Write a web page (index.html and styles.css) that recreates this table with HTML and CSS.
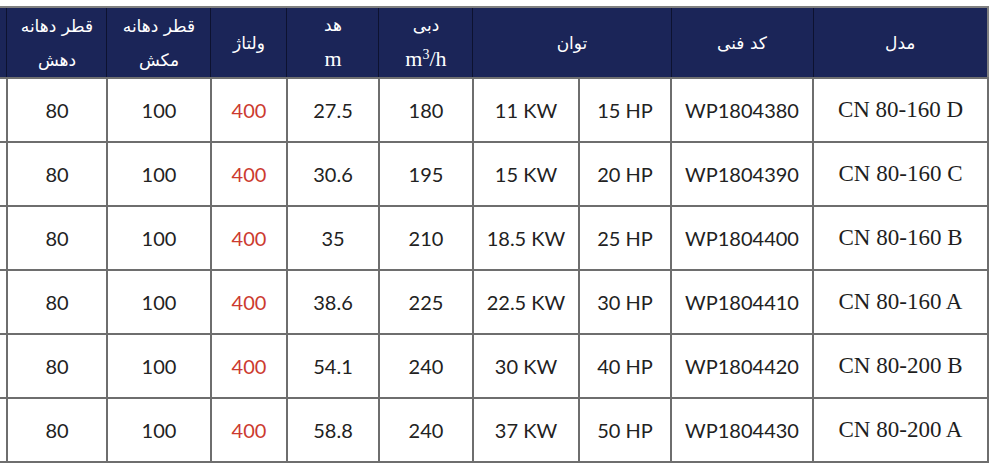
FILE: index.html
```html
<!DOCTYPE html>
<html lang="fa" dir="rtl">
<head>
<meta charset="utf-8">
<title>CN 80 pumps</title>
<link rel="stylesheet" href="styles.css">
</head>
<body>
<div class="wrap">
<table class="spec">
  <colgroup>
    <col class="c-model"><col class="c-code"><col class="c-hp"><col class="c-kw"><col class="c-flow"><col class="c-head"><col class="c-volt"><col class="c-suct"><col class="c-disc"><col class="c-extra">
  </colgroup>
  <thead>
    <tr>
      <th>مدل</th>
      <th>کد فنی</th>
      <th colspan="2">توان</th>
      <th>دبی<br><span class="unit">m<sup>3</sup>/h</span></th>
      <th>هد<br><span class="unit">m</span></th>
      <th>ولتاژ</th>
      <th>قطر دهانه<br>مکش</th>
      <th>قطر دهانه<br>دهش</th>
      <th class="extra"></th>
    </tr>
  </thead>
  <tbody>
    <tr><td class="model">CN 80-160 D</td><td>WP1804380</td><td>15 HP</td><td>11 KW</td><td>180</td><td>27.5</td><td class="volt">400</td><td>100</td><td>80</td><td class="extra"></td></tr>
    <tr><td class="model">CN 80-160 C</td><td>WP1804390</td><td>20 HP</td><td>15 KW</td><td>195</td><td>30.6</td><td class="volt">400</td><td>100</td><td>80</td><td class="extra"></td></tr>
    <tr><td class="model">CN 80-160 B</td><td>WP1804400</td><td>25 HP</td><td>18.5 KW</td><td>210</td><td>35</td><td class="volt">400</td><td>100</td><td>80</td><td class="extra"></td></tr>
    <tr><td class="model">CN 80-160 A</td><td>WP1804410</td><td>30 HP</td><td>22.5 KW</td><td>225</td><td>38.6</td><td class="volt">400</td><td>100</td><td>80</td><td class="extra"></td></tr>
    <tr><td class="model">CN 80-200 B</td><td>WP1804420</td><td>40 HP</td><td>30 KW</td><td>240</td><td>54.1</td><td class="volt">400</td><td>100</td><td>80</td><td class="extra"></td></tr>
    <tr><td class="model">CN 80-200 A</td><td>WP1804430</td><td>50 HP</td><td>37 KW</td><td>240</td><td>58.8</td><td class="volt">400</td><td>100</td><td>80</td><td class="extra"></td></tr>
  </tbody>
</table>
</div>
</body>
</html>
```
FILE: styles.css
```css
html, body {
  margin: 0;
  padding: 0;
  background: #ffffff;
}
.wrap {
  padding: 6px 11px 0 0;
}
.spec {
  border-collapse: collapse;
  table-layout: fixed;
  width: 989px;
  font-family: "DejaVu Sans", sans-serif;
}
.c-model { width: 175px; }
.c-code { width: 142px; }
.c-hp { width: 92px; }
.c-kw { width: 106px; }
.c-flow { width: 94px; }
.c-head { width: 92px; }
.c-volt { width: 76px; }
.c-suct { width: 104px; }
.c-disc { width: 100px; }
.c-extra { width: 8px; }

.spec th {
  background: #1b2558;
  color: #ffffff;
  font-weight: normal;
  font-size: 17px;
  line-height: 34px;
  height: 64px;
  padding: 0;
  text-align: center;
  vertical-align: middle;
  border-top: 2px solid #808080;
  border-left: 1px solid #0d1230;
  border-right: 1px solid #0d1230;
  border-bottom: 2px solid #707070;
}
.spec th:first-child { border-right: 2px solid #808080; }
.spec th.extra { border-left: none; }
.unit {
  font-family: "Liberation Serif", serif;
  font-size: 22px;
  direction: ltr;
  unicode-bidi: isolate;
}
.unit sup {
  font-size: 14px;
  vertical-align: 7px;
  line-height: 0;
}
.spec td {
  height: 62px;
  padding: 0;
  text-align: center;
  vertical-align: middle;
  font-family: "Lato", sans-serif;
  font-size: 20px;
  color: #222222;
  border: 2px solid #6e6e6e;
  direction: ltr;
  background: #ffffff;
}
.spec td.extra { border-left: none; }
.spec td.model {
  font-family: "Liberation Serif", serif;
  font-size: 23px;
  color: #1e1e1e;
}
.spec td.volt {
  color: #cc3b2f;
}
```
